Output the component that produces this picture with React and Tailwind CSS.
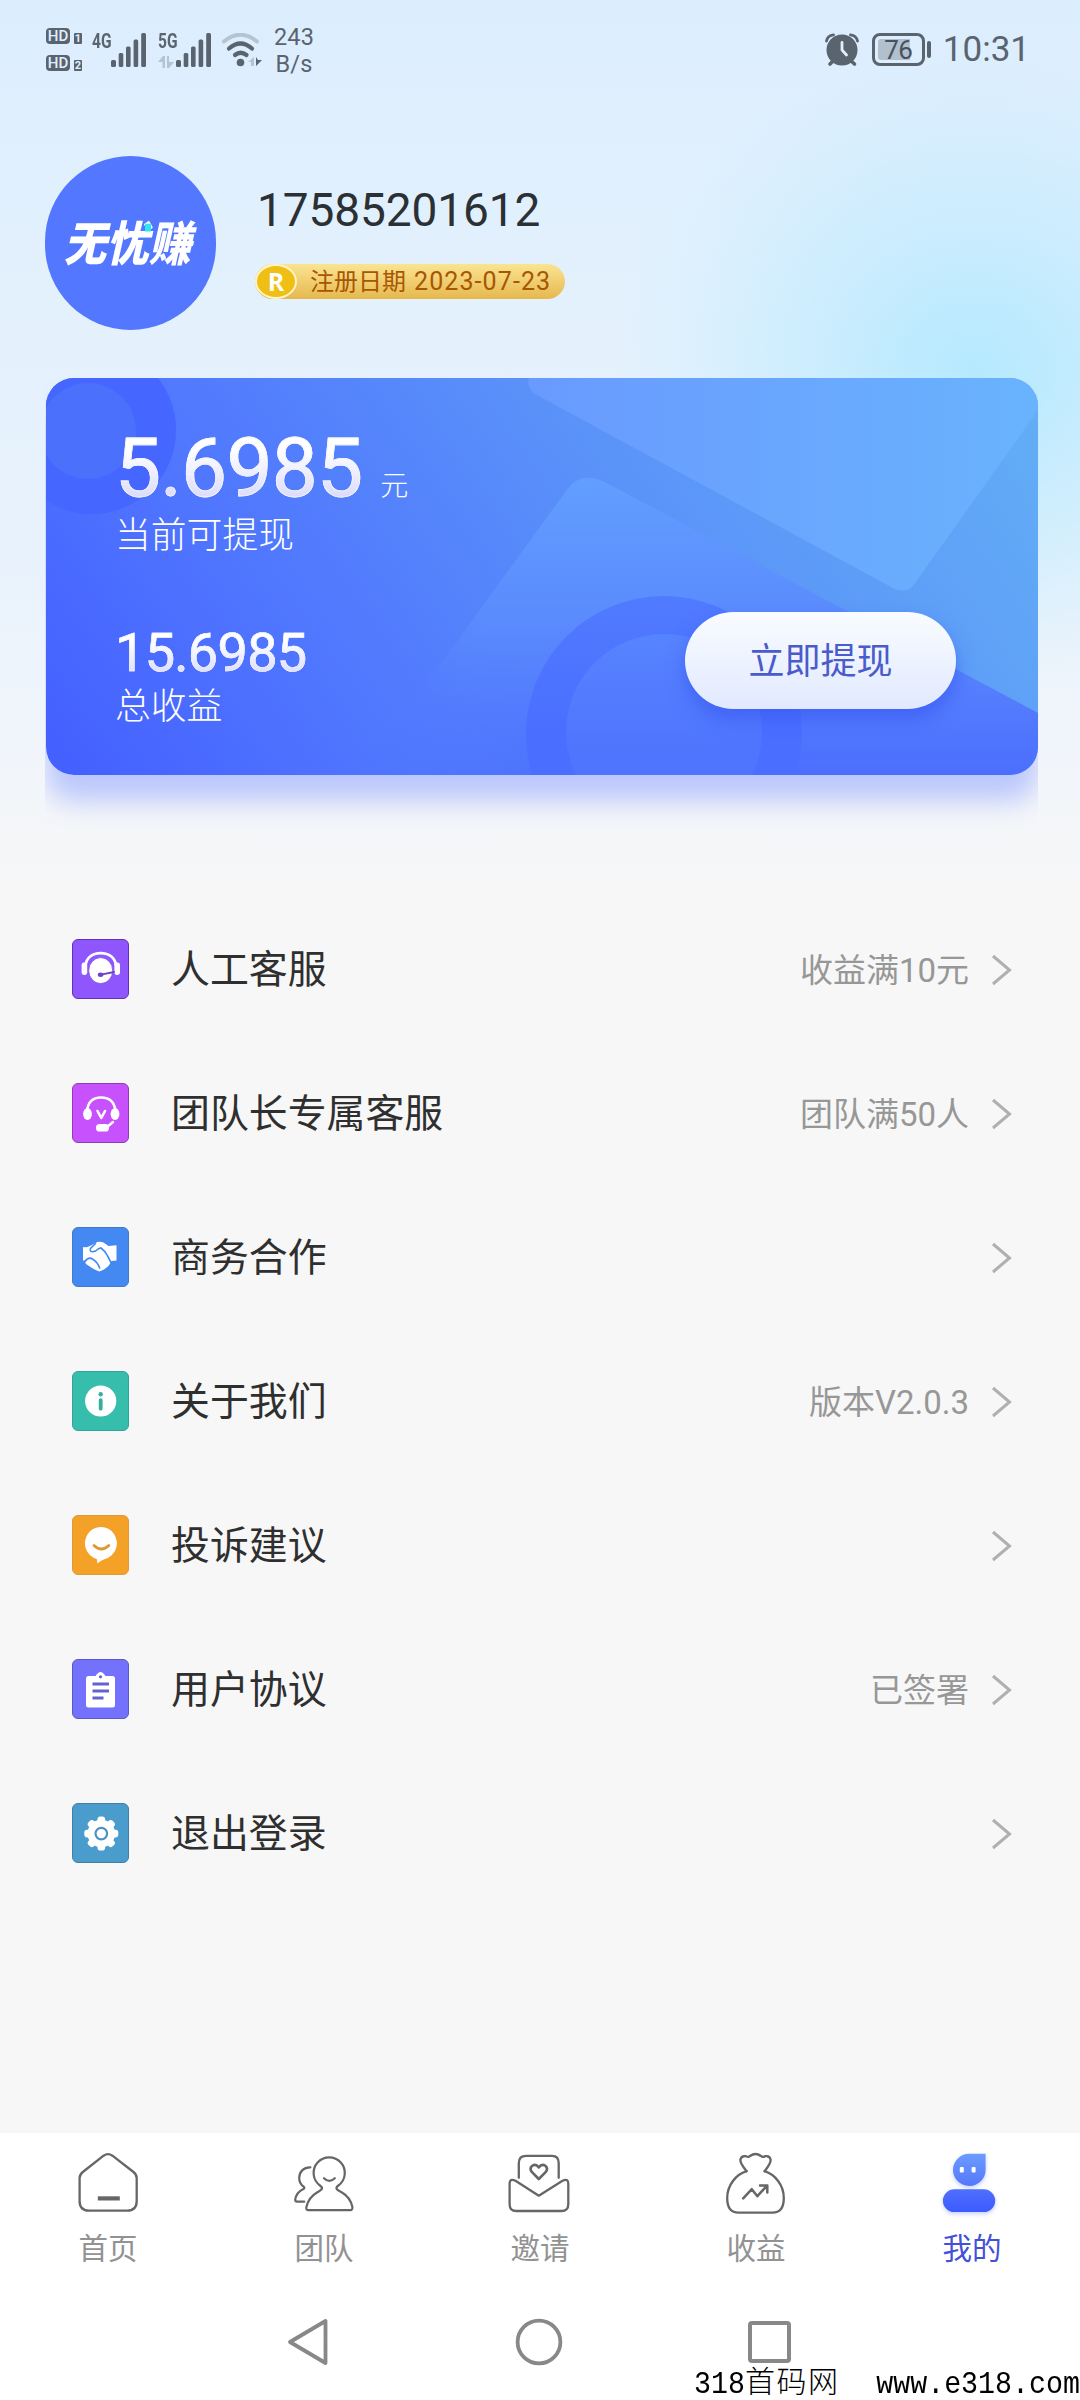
import { useState } from 'react';

const menuItems = [
  { label: '人工客服', note: '收益满10元', icon: HeadsetIcon, tile: 'bg-[#8f56fe] border-[#5f33b5]' },
  { label: '团队长专属客服', note: '团队满50人', icon: LeaderIcon, tile: 'bg-[#c751fd] border-[#8c3fb4]' },
  { label: '商务合作', note: '', icon: HandshakeIcon, tile: 'bg-[#4389f1] border-[#4379c9]' },
  { label: '关于我们', note: '版本V2.0.3', icon: InfoIcon, tile: 'bg-[#37bdab] border-[#35a295]' },
  { label: '投诉建议', note: '', icon: FeedbackIcon, tile: 'bg-[#f4a127] border-[#e09a35]' },
  { label: '用户协议', note: '已签署', icon: AgreementIcon, tile: 'bg-[#7472fd] border-[#5c59c4]' },
  { label: '退出登录', note: '', icon: GearIcon, tile: 'bg-[#4a9ccd] border-[#427fa6]' },
];

const tabs = [
  { label: '首页', icon: HomeIcon },
  { label: '团队', icon: TeamIcon },
  { label: '邀请', icon: InviteIcon },
  { label: '收益', icon: BagIcon },
  { label: '我的', icon: MineIcon },
];

function HeadsetIcon() {
  return (
    <svg viewBox="1 1 55 58" className="w-full h-full" fill="none">
      <path d="M13.4 27C14.5 18.500 20.500 14.200 28.700 14.200S43 18.500 44.200 27" stroke="#fff" strokeWidth="2.8" />
      <rect x="9.600" y="23.600" width="5.600" height="12.400" rx="2.400" fill="#fff" />
      <rect x="42.400" y="23.600" width="5.600" height="12.400" rx="2.400" fill="#fff" />
      <ellipse cx="28.700" cy="31.600" rx="12" ry="13" fill="#fff" stroke="#7a49dd" strokeWidth="0.8" />
      <path d="M42 33L29 35.600" stroke="#6c43c4" strokeWidth="1.8" strokeLinecap="round" />
      <ellipse cx="28.600" cy="35.800" rx="2.800" ry="2.200" fill="#6c43c4" />
    </svg>
  );
}

function LeaderIcon() {
  return (
    <svg viewBox="1 1 55 58" className="w-full h-full" fill="none" stroke="#fff" strokeLinecap="round">
      <path d="M15 28C16 19 21 14.5 29 14.5S42.5 19 43.5 28" strokeWidth="2.6" />
      <ellipse cx="15.5" cy="31" rx="4.4" ry="6" fill="#fff" stroke="none" />
      <ellipse cx="43" cy="31" rx="4.4" ry="6" fill="#fff" stroke="none" />
      <path d="M25.5 28L29.3 35L33 28" strokeWidth="2.6" strokeLinejoin="round" />
      <path d="M35 44L41 39" strokeWidth="2.4" />
      <rect x="24" y="41" width="13" height="7.5" rx="3.6" fill="#fff" stroke="none" />
    </svg>
  );
}

function HandshakeIcon() {
  return (
    <svg viewBox="1 1 55 58" className="w-full h-full">
      <path
        d="M11 20Q14 21 18 19L23 16.200Q27 13.800 31.500 15.600L36.500 19L44.500 18.200V33.500L39.500 34L36.500 39L32 42.500L27.500 44.500Q24 43.500 20 41L14 37Q12.800 35.500 13.500 33.500H11Z"
        fill="#fff"
      />
      <path
        d="M23.500 16.500L18.500 21.500Q17.500 24.500 20.500 24.800Q24 24.500 26.500 21.800L29 21Q33 24 35 28L39 35.500M13 34.500Q16.500 29.500 20.500 32Q26 35.500 27.600 41"
        fill="none"
        stroke="#4389f1"
        strokeWidth="1.600"
        strokeLinecap="round"
      />
    </svg>
  );
}

function InfoIcon() {
  return (
    <svg viewBox="1 1 55 58" className="w-full h-full">
      <circle cx="28.7" cy="30" r="15.6" fill="#fff" />
      <circle cx="28.7" cy="23.2" r="2.2" fill="#36ad9d" />
      <rect x="26.8" y="27.2" width="3.8" height="12.4" rx="1.9" fill="#36ad9d" />
    </svg>
  );
}

function FeedbackIcon() {
  return (
    <svg viewBox="1 1 55 58" className="w-full h-full">
      <path d="M25.5 48.5L24.8 44A16 16.3 0 1 1 33 44Q29 45 25.5 48.5Z" fill="#fff" />
      <path d="M22 30.5Q29.3 37.5 36.8 30.5" fill="none" stroke="#dd9a33" strokeWidth="2.8" strokeLinecap="round" />
    </svg>
  );
}

function AgreementIcon() {
  return (
    <svg viewBox="1 1 55 58" className="w-full h-full">
      <rect x="14" y="17" width="29" height="31.5" rx="2.5" fill="#fff" />
      <path d="M22 20Q24 16 25 15Q28.5 11 32 15Q33 16 35 20Z" fill="#fff" />
      <circle cx="28.5" cy="17.8" r="1.6" fill="#6462cf" />
      <path d="M20.5 25H37M20.5 32H37M20.5 39H31.5" stroke="#6462cf" strokeWidth="2.8" />
    </svg>
  );
}

function GearIcon() {
  return (
    <svg viewBox="1 1 55 58" className="w-full h-full">
      <g transform="translate(29.3 30.6)" fill="#fff">
        <circle r="13.8" />
        {[0, 45, 90, 135, 180, 225, 270, 315].map((deg) => (
          <rect key={deg} x="-3.8" y="-17" width="7.6" height="8" rx="2.8" transform={`rotate(${deg})`} />
        ))}
        <circle r="5.8" stroke="#4a93c0" strokeWidth="2.2" />
      </g>
    </svg>
  );
}

function HomeIcon() {
  return (
    <svg viewBox="0 0 64 64" className="w-16 h-16" fill="none" stroke="#666" strokeWidth="2.3">
      <path d="M27.6 5.7Q32 2.6 36.4 5.7L57.5 22Q60.7 24.6 60.7 28V51Q60.7 60.7 51 60.7H13.2Q3.6 60.7 3.6 51V28Q3.6 24.6 6.8 22Z" />
      <path d="M21.8 48.4H43.8" strokeWidth="4.2" />
    </svg>
  );
}

function TeamIcon() {
  return (
    <svg viewBox="0 0 64 64" className="w-16 h-16" fill="none" stroke="#666" strokeWidth="2.2" strokeLinecap="round" strokeLinejoin="round">
      <path d="M30 38.8Q30.4 37.2 28 35.5A15.6 15.6 0 1 1 46.4 35.5Q44 37.2 44.6 38.8Q45.4 40 50 42.5Q58.5 47.5 60.4 57Q60.8 60 58 60.2H16.5Q13.8 60 14.4 57Q16.5 47.5 25 42.5Q29.4 40 30 38.8Z" />
      <path d="M32 28.2Q37.2 33.4 42.8 28.2" />
      <path d="M18.4 17.3C12 17 7.2 21.5 7.2 28C7.2 32 9 34.8 11.6 36.6Q13.2 37.8 11.4 39Q4.2 42.5 3.2 49.6Q3.2 51.7 5 51.7H12.2" />
    </svg>
  );
}

function InviteIcon() {
  return (
    <svg viewBox="0 0 64 64" className="w-16 h-16" fill="none" stroke="#666" strokeWidth="2.3" strokeLinecap="round" strokeLinejoin="round">
      <path d="M10.8 27.8V13Q10.8 5.8 18 5.8H44Q50.7 5.8 50.7 13V27.8" />
      <path d="M7.5 30.8L30.8 45.7L54.5 30.8Q60.3 28 60.3 33.6V54Q60.3 61 53.5 61H8.3Q1.6 61 1.6 54V33.6Q1.6 28 7.5 30.8Z" />
      <path d="M30.8 29L24 22.2Q21 18.5 24.3 15.8Q27.8 13.4 30.8 17.4Q33.8 13.4 37.3 15.8Q40.6 18.5 37.6 22.2Z" strokeWidth="2.6" />
    </svg>
  );
}

function BagIcon() {
  return (
    <svg viewBox="0 0 64 64" className="w-16 h-16" fill="none" stroke="#666" strokeWidth="2.3" strokeLinecap="round" strokeLinejoin="round">
      <path d="M22.6 21.2C19.5 17 16 13.5 16.4 9.6Q17.4 5.4 22 6.2Q24.6 7.6 26 6Q31.5 2 37 6Q38.6 7.6 41 6.2Q45.8 5.4 46.6 9.6C47 13.5 43.6 17 40.6 21.2" />
      <path d="M22.6 21.2C12 24.5 3.2 35 3.2 48Q3.2 62.7 14.5 62.7H48.5Q59.8 62.7 59.8 48C59.8 35 51 24.5 40.6 21.2" />
      <path d="M19.2 48.4L27.8 39.2L33.4 46.2L43 35.6M36 35.4H43.3V42.4" strokeWidth="2.5" />
    </svg>
  );
}

function MineIcon() {
  return (
    <svg viewBox="0 0 64 64" className="w-16 h-16 overflow-visible drop-shadow-[0_2px_2px_rgba(70,95,255,0.3)]">
      <defs>
        <linearGradient id="mineHead" x1="0" y1="0" x2="0" y2="1">
          <stop offset="0" stopColor="#6b9dff" />
          <stop offset="1" stopColor="#5577fb" />
        </linearGradient>
        <linearGradient id="mineBody" x1="0" y1="0" x2="0" y2="1">
          <stop offset="0" stopColor="#4f6ffc" />
          <stop offset="1" stopColor="#3c5bff" />
        </linearGradient>
      </defs>
      <path d="M29 3.8H45.6V20A16.3 16.1 0 1 1 29 3.8Z" fill="url(#mineHead)" />
      <rect x="19.8" y="17" width="4" height="5.6" rx="1" fill="#fff" />
      <rect x="31.6" y="17" width="4" height="5.6" rx="1" fill="#fff" />
      <rect x="2.9" y="39.3" width="52.3" height="22.8" rx="11.4" fill="url(#mineBody)" />
    </svg>
  );
}

function SignalBars() {
  return (
    <svg viewBox="0 0 36 34" className="w-9 h-[34px]" fill="#59646f">
      <rect x="0" y="27" width="5" height="7" rx="1.5" />
      <rect x="7.7" y="20" width="4.6" height="14" rx="1.5" />
      <rect x="15" y="13.5" width="4.6" height="20.5" rx="1.5" />
      <rect x="22.6" y="6.5" width="4.6" height="27.5" rx="1.5" />
      <rect x="30.2" y="0" width="4.8" height="34" rx="1.5" />
    </svg>
  );
}

function HdBadge({ slot }) {
  return (
    <div className="flex items-end gap-1 h-4">
      <span className="w-6 h-4 rounded-[4px] bg-[#59646f] text-[#e0efff] text-[15px] leading-4 font-medium text-center">HD</span>
      <span className="w-2 h-[11px] rounded-[1px] bg-[#59646f] text-[#e0efff] text-[11px] leading-[11px] font-bold text-center">{slot}</span>
    </div>
  );
}

function StatusBar() {
  return (
    <div className="h-[98px] pl-[46px] pr-[50px] pt-[28px] flex justify-between items-start text-[#59646f]">
      <div className="flex items-start">
        <div className="flex flex-col gap-[11px] w-[46px]">
          <HdBadge slot="1" />
          <HdBadge slot="2" />
        </div>
        <div className="flex items-start w-[66px] pt-[5px]">
          <span className="w-[19px] text-[21px] leading-4 font-bold origin-left scale-x-[0.74]">4G</span>
          <SignalBars />
        </div>
        <div className="flex items-start w-[63px] pt-[5px]">
          <div className="w-[18px] flex flex-col gap-[7px]">
            <span className="text-[21px] leading-4 font-bold origin-left scale-x-[0.74]">5G</span>
            <svg viewBox="0 0 16 12" className="w-4 h-3" fill="#b5c4d3">
              <path d="M0 6L5 0H7V12H4.5V6ZM9 0H11V6H16L11 12H9Z" />
            </svg>
          </div>
          <SignalBars />
        </div>
        <svg viewBox="0 0 42 34" className="w-[42px] h-[34px] mt-[5px]" fill="none" strokeLinecap="round">
          <path d="M3 8.5Q19.5 -5 36 8.5" stroke="#b5c4d3" strokeWidth="4" />
          <path d="M8 15.5Q19.5 5.5 31 15.5" stroke="#59646f" strokeWidth="4.2" />
          <path d="M14 22Q19.5 17.5 25.5 22" stroke="#59646f" strokeWidth="4.2" />
          <circle cx="19.5" cy="29.5" r="3.8" fill="#59646f" />
          <path d="M33 24L27 29H30V33H33Z" fill="#b5c4d3" />
          <path d="M35 24V33L41 27H37Z" fill="#59646f" />
        </svg>
        <div className="ml-[7px] w-12 -mt-[4px] text-center text-[23.5px] leading-[27px] tracking-[0.2px]">
          <div>243</div>
          <div>B/s</div>
        </div>
      </div>
      <div className="flex items-center pt-[4px]">
        <svg viewBox="0 0 34 34" className="w-[34px] h-[34px]" fill="none">
          <path d="M1.5 8Q2.5 2.5 8.5 1.8M25.5 1.8Q31.5 2.5 32.5 8" stroke="#59646f" strokeWidth="2.8" strokeLinecap="round" />
          <path d="M5 31L9 27M29.5 31L25 27" stroke="#59646f" strokeWidth="3.6" strokeLinecap="round" />
          <circle cx="17" cy="17" r="15.5" fill="#59646f" />
          <path d="M17 9.5V17L21.5 22" stroke="#e0efff" strokeWidth="2.8" strokeLinecap="round" />
        </svg>
        <div className="ml-[13px] w-[53px] h-[33px] rounded-[8px] border-3 border-[#59646f] p-[3px]">
          <div className="h-full bg-[linear-gradient(90deg,#b2bfcc_79%,transparent_79%)] rounded-[3px] flex items-center justify-center text-[26px] leading-none tracking-[-0.5px] text-[#46525d]">76</div>
        </div>
        <div className="ml-[2px] w-[4px] h-[17px] rounded-sm bg-[#59646f]" />
        <div className="ml-[12px] text-[35px] leading-[35px]">10:31</div>
      </div>
    </div>
  );
}

function Profile() {
  return (
    <div className="flex h-[280px] pl-[45px] pt-[58px]">
      <div className="w-[171px] h-[174px] rounded-full bg-[#5377fe] flex items-center justify-center text-white">
        <span className="relative -ml-[6px] mt-[5px] text-[42.5px] leading-none font-black italic scale-y-[1.12]">
          无忧赚
          <span className="absolute left-[81px] top-[2px] w-[6px] h-[7px] bg-[#2ee6f0]" />
        </span>
      </div>
      <div className="ml-[39px] pt-[27px]">
        <div className="ml-[2px] text-[46px] leading-[54px] tracking-[-0.1px] text-[#2b3035]">17585201612</div>
        <div className="mt-[27px] w-[310px] h-[35px] rounded-full bg-gradient-to-b from-[#fbe491] to-[#e5b84c] flex items-center">
          <div className="w-[42px] h-[35px] rounded-[50%] bg-[#f0bf15] border-2 border-[#fff3c8] flex items-center justify-center font-['Open_Sans'] font-bold text-[25px] leading-none text-white">
            R
          </div>
          <span className="ml-[13px] text-[24px] leading-none text-[#a75605] whitespace-nowrap">注册日期</span>
          <span className="ml-[8px] text-[25px] leading-none text-[#a75605] whitespace-nowrap tracking-[1.1px]">2023-07-23</span>
        </div>
      </div>
    </div>
  );
}

function CardArt() {
  return (
    <svg viewBox="46 378 992 397" className="absolute inset-0 w-full h-full">
      <defs>
        <linearGradient id="flap" x1="0" y1="0" x2="1" y2="0">
          <stop offset="0" stopColor="#699aff" />
          <stop offset="1" stopColor="#69b3fd" />
        </linearGradient>
        <linearGradient id="sheet" x1="0" y1="0" x2="0" y2="1">
          <stop offset="0" stopColor="#629eff" />
          <stop offset="0.5" stopColor="#5a8afd" />
          <stop offset="1" stopColor="#4c6efe" />
        </linearGradient>
        <linearGradient id="sheetFade" gradientUnits="userSpaceOnUse" x1="360" y1="740" x2="500" y2="640">
          <stop offset="0" stopColor="#fff" stopOpacity="0" />
          <stop offset="1" stopColor="#fff" />
        </linearGradient>
        <mask id="sheetMask">
          <rect x="46" y="378" width="992" height="397" fill="url(#sheetFade)" />
        </mask>
        <linearGradient id="ring" x1="0" y1="0" x2="0" y2="1">
          <stop offset="0" stopColor="#507bff" />
          <stop offset="0.5" stopColor="#4a6eff" />
        </linearGradient>
        <linearGradient id="ringHole" x1="0" y1="0" x2="0" y2="1">
          <stop offset="0" stopColor="#5684fe" />
          <stop offset="0.6" stopColor="#4f74fe" />
        </linearGradient>
      </defs>
      <circle cx="92" cy="430" r="84" fill="#4566ff" />
      <circle cx="88" cy="431" r="48" fill="#4b70fc" />
      <path d="M360 775L566 491Q579 471 603 481L1038 713V775Z" fill="url(#sheet)" mask="url(#sheetMask)" />
      <path d="M529 378Q526 387 535 394L893 588Q905 594 913 586L1038 410V378Z" fill="url(#flap)" />
      <circle cx="664" cy="734" r="138" fill="url(#ring)" />
      <circle cx="664" cy="732" r="98" fill="url(#ringHole)" />
    </svg>
  );
}

function BalanceCard() {
  return (
    <div className="ml-[45px] w-[993px] h-[459px] pl-px overflow-hidden">
      <div className="relative h-[397px] rounded-[28px] shadow-[0_26px_26px_rgba(92,120,255,0.36)]">
        <div className="relative h-full rounded-[28px] overflow-hidden bg-[linear-gradient(55deg,#4460ff_2%,#4e72ff_22%,#5482fc_42%,#5a92f9_60%,#63aff5_100%)]">
          <CardArt />
          <div className="relative flex justify-between h-full pl-[69px] pr-[82px] text-white">
            <div className="flex flex-col">
              <div className="mt-[42px] h-[96px] flex items-baseline">
                <span className="bg-gradient-to-b from-white from-30% to-[#dcdcfb] to-80% bg-clip-text text-transparent text-[82px] leading-[96px] tracking-[-0.8px] [-webkit-text-stroke:0.8px_#f4f5ff]">5.6985</span>
                <span className="ml-[18px] text-[28px] leading-none font-light">元</span>
              </div>
              <div className="text-[35.8px] leading-[40px] font-light">当前可提现</div>
              <div className="mt-[66px] h-[62px]">
                <span className="bg-gradient-to-b from-white from-30% to-[#dcdcfb] to-85% bg-clip-text text-transparent text-[54px] leading-[62px] tracking-[-0.7px] [-webkit-text-stroke:0.6px_#f4f5ff]">15.6985</span>
              </div>
              <div className="mt-[3px] text-[35.8px] leading-[40px] font-light">总收益</div>
            </div>
            <button className="mt-[234px] w-[271px] h-[97px] rounded-full bg-gradient-to-b from-[#f9fcff] to-[#e1e9ff] shadow-[0_10px_18px_rgba(55,85,240,0.6)] text-[36px] leading-none text-[#4a5bcb] pt-[2px]">
              立即提现
            </button>
          </div>
        </div>
      </div>
    </div>
  );
}

function MenuRow({ item }) {
  const Icon = item.icon;
  return (
    <div className="h-36 pl-[72px] pr-[68px] flex items-center">
      <div className={`w-[57px] h-[60px] rounded-[6px] border ${item.tile}`}>
        <Icon />
      </div>
      <span className="ml-[42px] pt-[3px] text-[38.9px] leading-none text-[#2f2f2f]">{item.label}</span>
      <span className="ml-auto pt-[3px] text-[33px] leading-none text-[#979797]">{item.note}</span>
      <svg viewBox="0 0 20 32" className="w-5 h-8 ml-[23px] mt-[2px]" fill="none" stroke="#b0b0b0" strokeWidth="3">
        <path d="M1 2L17.5 16L1 30" />
      </svg>
    </div>
  );
}

export default function App() {
  const [active, setActive] = useState('我的');

  return (
    <div className="w-[1080px] h-[2400px] flex flex-col overflow-hidden bg-[#f7f7f7] font-[Roboto,'Noto_Sans_CJK_SC',sans-serif]">
      <div className="h-[897px] shrink-0 bg-[radial-gradient(ellipse_360px_320px_at_975px_370px,#b5e9ff_0%,#b5e9ffa0_35%,#b5e9ff40_70%,#b5e9ff00_100%),linear-gradient(180deg,#dcedfe_0px,#e3f1fd_280px,#e8f2fc_550px,#f1f5fb_750px,#f7f7f7_897px)]">
        <StatusBar />
        <Profile />
        <BalanceCard />
      </div>

      <div className="flex-1">
        {menuItems.map((item) => (
          <MenuRow key={item.label} item={item} />
        ))}
      </div>

      <div className="h-[267px] bg-white flex flex-col">
        <div className="grid grid-cols-5 pt-[17px]">
          {tabs.map(({ label, icon: Icon }) => (
            <button key={label} onClick={() => setActive(label)} className="flex flex-col items-center">
              <Icon />
              <span className={`mt-[20px] text-[29.5px] leading-[31px] ${active === label ? 'text-[#4450d8]' : 'text-[#929292]'}`}>
                {label}
              </span>
            </button>
          ))}
        </div>

        {/* system navigation keys */}
        <div className="flex items-center justify-between mt-[52px] pl-[286px] pr-[289px]">
          <svg viewBox="0 0 44 50" className="w-11 h-[50px]" fill="none" stroke="#888" strokeWidth="3.8" strokeLinejoin="round">
            <path d="M4 25L39.5 4V46Z" />
          </svg>
          <svg viewBox="0 0 50 50" className="w-[50px] h-[50px]" fill="none" stroke="#888" strokeWidth="3.8">
            <circle cx="25" cy="25" r="21.4" />
          </svg>
          <div className="w-[43px] h-[42px] rounded-[4px] border-4 border-[#888]" />
        </div>

        <div className="self-end w-[386px] h-[33px] flex justify-between items-center text-black whitespace-nowrap font-['Liberation_Mono','Noto_Sans_CJK_SC',monospace] text-[28.3px] leading-[32px]">
          <span className="flex items-center">
            <span className="scale-y-[1.1]">318</span>
            <span className="pt-px text-[30px] tracking-[1.5px] leading-[32px] font-light">首码网</span>
          </span>
          <span className="scale-y-[1.1]">www.e318.com</span>
        </div>
      </div>
    </div>
  );
}
